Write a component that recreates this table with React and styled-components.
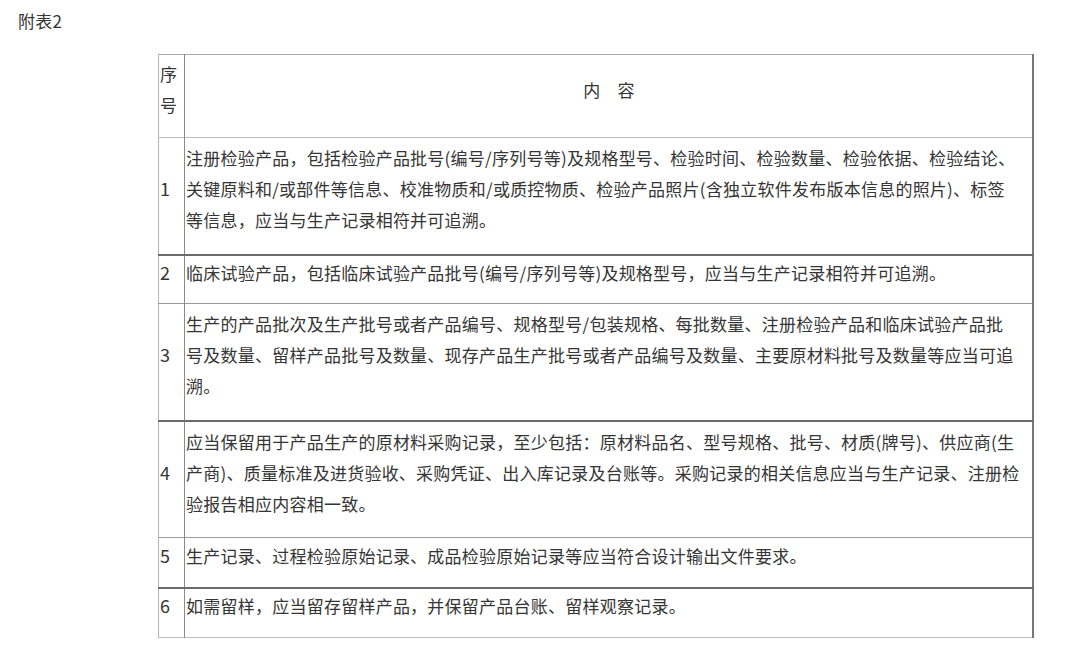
import React from 'react';
import styled, { createGlobalStyle } from 'styled-components';

// Базовые стили страницы
const GlobalStyle = createGlobalStyle`
  html, body {
    margin: 0;
    padding: 0;
    background: #ffffff;
  }
  body {
    font-family: "Noto Sans CJK SC", "Noto Sans", sans-serif;
    color: #353535;
  }
`;

const Page = styled.div`
  width: 1080px;
  height: 656px;
  padding: 0 18px;
  box-sizing: border-box;
  overflow: hidden;
`;

const Caption = styled.p`
  margin: 5px 0 0;
  font-size: 17px;
  line-height: 31px;
  letter-spacing: 0.2px;
`;

const Table = styled.table`
  margin: 18px 0 0 140px;
  width: 876px;
  border-collapse: collapse;
  table-layout: fixed;
  font-size: 17px;
  line-height: 31px;
  letter-spacing: 0.24px;
  border-top: 1px solid #a6a6a6;
  border-left: 1px solid #b4b4b4;
  border-right: 2px solid #777777;
`;

const IndexCol = styled.col`
  width: 26px;
`;

const Row = styled.tr`
  border-bottom: ${(p) => p.$edge};
`;

// Ячейка с номером (цифры чуть крупнее, как в оригинале)
const IndexCell = styled.td`
  height: ${(p) => p.$h}px;
  padding: 0 0 14px 1px;
  box-sizing: border-box;
  vertical-align: middle;
  border-right: 1px solid #8a8a8a;
  word-break: break-all;
  font-size: ${(p) => (p.$head ? 17 : 18)}px;
`;

const ContentCell = styled.td`
  height: ${(p) => p.$h}px;
  padding: 0 0 14px 1px;
  box-sizing: border-box;
  vertical-align: middle;
  text-align: ${(p) => (p.$center ? 'center' : 'left')};
`;

const Line = styled.span`
  display: block;
  white-space: nowrap;
`;

const thin = '1px solid #bdbdbd';
const mid = '1px solid #9a9a9a';
const dark = '2px solid #6a6a6a';

const rows = [
  {
    no: '1',
    h: 117,
    edge: dark,
    lines: [
      '注册检验产品，包括检验产品批号(编号/序列号等)及规格型号、检验时间、检验数量、检验依据、检验结论、',
      '关键原料和/或部件等信息、校准物质和/或质控物质、检验产品照片(含独立软件发布版本信息的照片)、标签',
      '等信息，应当与生产记录相符并可追溯。',
    ],
  },
  {
    no: '2',
    h: 49,
    edge: mid,
    lines: ['临床试验产品，包括临床试验产品批号(编号/序列号等)及规格型号，应当与生产记录相符并可追溯。'],
  },
  {
    no: '3',
    h: 117,
    edge: dark,
    lines: [
      '生产的产品批次及生产批号或者产品编号、规格型号/包装规格、每批数量、注册检验产品和临床试验产品批',
      '号及数量、留样产品批号及数量、现存产品生产批号或者产品编号及数量、主要原材料批号及数量等应当可追',
      '溯。',
    ],
  },
  {
    no: '4',
    h: 117,
    edge: mid,
    lines: [
      '应当保留用于产品生产的原材料采购记录，至少包括：原材料品名、型号规格、批号、材质(牌号)、供应商(生',
      '产商)、质量标准及进货验收、采购凭证、出入库记录及台账等。采购记录的相关信息应当与生产记录、注册检',
      '验报告相应内容相一致。',
    ],
  },
  {
    no: '5',
    h: 50,
    edge: dark,
    lines: ['生产记录、过程检验原始记录、成品检验原始记录等应当符合设计输出文件要求。'],
  },
  {
    no: '6',
    h: 50,
    edge: thin,
    lines: ['如需留样，应当留存留样产品，并保留产品台账、留样观察记录。'],
  },
];

const App = () => {
  return (
    <Page>
      <GlobalStyle />
      <Caption>附表2</Caption>
      <Table>
        <colgroup>
          <IndexCol />
          <col />
        </colgroup>
        <tbody>
          <Row $edge={thin}>
            <IndexCell $h={83} $head>
              序号
            </IndexCell>
            <ContentCell $h={83} $center>
              内　容
            </ContentCell>
          </Row>
          {rows.map((r) => (
            <Row key={r.no} $edge={r.edge}>
              <IndexCell $h={r.h}>{r.no}</IndexCell>
              <ContentCell $h={r.h}>
                {r.lines.map((l, i) => (
                  <Line key={i}>{l}</Line>
                ))}
              </ContentCell>
            </Row>
          ))}
        </tbody>
      </Table>
    </Page>
  );
};

export default App;
